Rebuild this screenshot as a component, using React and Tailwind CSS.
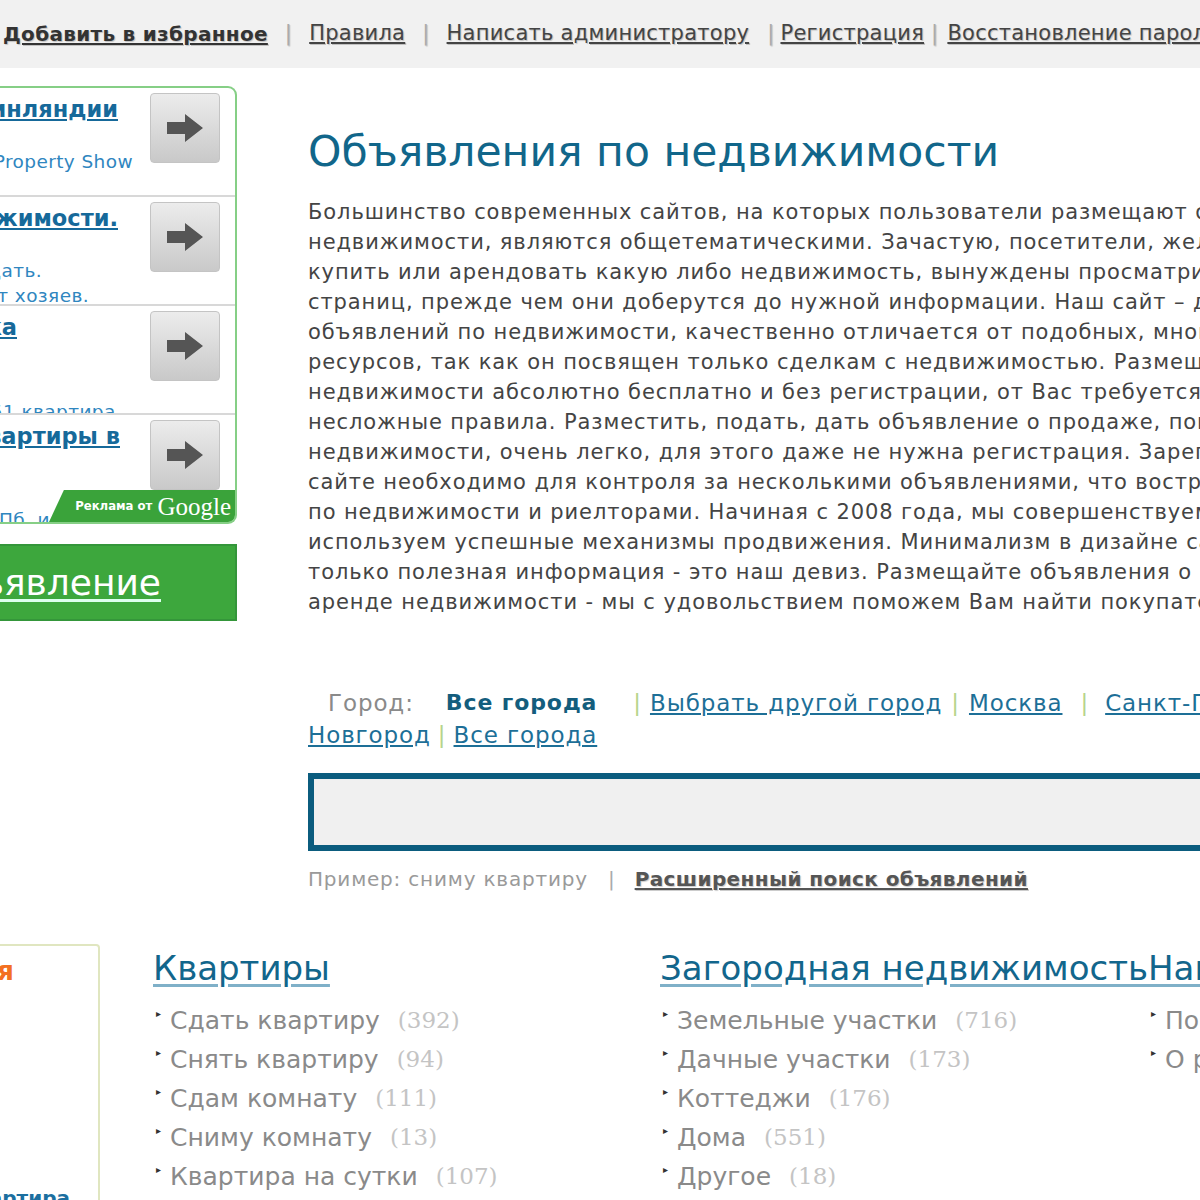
import React from "react";

const font = { fontFamily: '"DejaVu Sans", Verdana, sans-serif' };

// Top navigation links
function TopBar() {
  return (
    <div className="h-[68px] bg-[#f1f1f1] flex items-center whitespace-nowrap text-[21px] tracking-[0.25px] text-[#444] [text-shadow:1px_1px_1px_rgba(0,0,0,0.2)]">
      <a className="ml-[3px] text-[20px] tracking-[0.3px] font-bold text-[#333] underline underline-offset-2">Добавить в избранное</a>
      <span className="mx-[17px] text-[#aaa]">|</span>
      <a className="underline underline-offset-2">Правила</a>
      <span className="mx-[17px] text-[#aaa]">|</span>
      <a className="underline underline-offset-2">Написать администратору</a>
      <span className="ml-[18px] mr-[6px] text-[#aaa]">|</span>
      <a className="underline underline-offset-2">Регистрация</a>
      <span className="ml-[7px] mr-[9px] text-[#aaa]">|</span>
      <a className="underline underline-offset-2">Восстановление пароля</a>
    </div>
  );
}

function ArrowButton() {
  return (
    <div className="w-[70px] h-[70px] shrink-0 rounded-[4px] border border-[#c4c4c4] bg-gradient-to-b from-[#ececec] to-[#c9c9c9] flex items-center justify-center">
      <svg width="40" height="32" viewBox="0 0 40 32">
        <path d="M2 10 H20 V2 L38 16 L20 30 V22 H2 Z" fill="#555" />
      </svg>
    </div>
  );
}

// Line cut off at left edge (overflow goes to the left side)
function Cut({ children, className = "" }) {
  return (
    <div className={"flex justify-end overflow-hidden " + className}>
      <span className="whitespace-nowrap shrink-0">{children}</span>
    </div>
  );
}

const ads = [
  {
    title: "Недвижимость Финляндии",
    tr: "pr-[32px]",
    lines: [{ t: "International Property Show", pr: "pr-[17px]", mt: "mt-[23px]" }],
  },
  {
    title: "Продажа недвижимости.",
    tr: "pr-[32px]",
    lines: [
      { t: "Купить, снять, продать.", pr: "pr-[108px]", mt: "mt-[23px]" },
      { t: "Квартиры от хозяев.", pr: "pr-[61px]", mt: "mt-[0px]" },
    ],
  },
  {
    title: "Аренда и продажа",
    tr: "pr-[133px]",
    lines: [{ t: "от 1 251 квартира.", pr: "pr-[28px]", mt: "mt-[55px]" }],
  },
  {
    title: "Купить квартиры в",
    tr: "pr-[30px]",
    lines: [{ t: "Москве, СПб. и", pr: "pr-[100px]", mt: "mt-[54px]" }],
  },
];

function AdBox() {
  return (
    <div className="relative h-[438px] border-2 border-[#86cf86] rounded-r-[9px] border-l-0 bg-white overflow-hidden">
      {ads.map((ad, i) => (
        <div
          key={i}
          className={
            "h-[109px] flex " + (i < 3 ? "border-b-2 border-[#d8d8d8]" : "")
          }
        >
          <div className="w-[150px] shrink-0 overflow-hidden">
            <Cut className={"mt-[5px] " + ad.tr}>
              <span className="text-[22.5px] font-bold text-[#16699a] underline underline-offset-2">
                {ad.title}
              </span>
            </Cut>
            {ad.lines.map((l, j) => (
              <Cut key={j} className={l.mt + " " + l.pr}>
                <span className="text-[18.5px] tracking-[0.4px] leading-[23px] text-[#2f86bf]">{l.t}</span>
              </Cut>
            ))}
          </div>
          <div className="pt-[5px]">
            <ArrowButton />
          </div>
        </div>
      ))}
      {/* Google badge */}
      <div className="absolute right-0 bottom-0 h-[32px] w-[186px] bg-[#3aa33a] rounded-tl-[14px] [clip-path:polygon(8%_0,100%_0,100%_100%,0_100%)] flex items-center justify-end pr-[4px] text-white">
        <span className="text-[13px] font-bold mr-[5px]" style={{ fontFamily: '"DejaVu Sans Condensed", sans-serif' }}>
          Реклама от
        </span>
        <span className="text-[25px] leading-none" style={{ fontFamily: '"Liberation Serif", serif' }}>
          Google
        </span>
      </div>
    </div>
  );
}

function SubmitButton() {
  return (
    <div className="mt-[20px] h-[77px] bg-[#3da73d] border-2 border-[#34963a] border-l-0 flex items-center overflow-hidden">
      <Cut className="w-full pr-[74px]">
        <span className="text-[36px] text-white underline decoration-[#dfe] underline-offset-4">
          Подать объявление
        </span>
      </Cut>
    </div>
  );
}

const para = [
  "Большинство современных сайтов, на которых пользователи размещают объявления о продаже",
  "недвижимости, являются общетематическими. Зачастую, посетители, желающие",
  "купить или арендовать какую либо недвижимость, вынуждены просматривать десятки",
  "страниц, прежде чем они доберутся до нужной информации. Наш сайт – доска",
  "объявлений по недвижимости, качественно отличается от подобных, многопрофильных",
  "ресурсов, так как он посвящен только сделкам с недвижимостью. Размещение объявлений",
  "недвижимости абсолютно бесплатно и без регистрации, от Вас требуется соблюдать",
  "несложные правила. Разместить, подать, дать объявление о продаже, покупке, аренде",
  "недвижимости, очень легко, для этого даже не нужна регистрация. Зарегистрироваться на",
  "сайте необходимо для контроля за несколькими объявлениями, что востребовано агентствами",
  "по недвижимости и риелторами. Начиная с 2008 года, мы совершенствуем сайт и",
  "используем успешные механизмы продвижения. Минимализм в дизайне сайта и",
  "только полезная информация - это наш девиз. Размещайте объявления о продаже и",
  "аренде недвижимости - мы с удовольствием поможем Вам найти покупателя!",
];

function Main() {
  return (
    <div className="ml-[71px] flex-1 min-w-0">
      <h1 className="mt-[54px] text-[42.5px] leading-[60px] text-[#11668a] whitespace-nowrap">
        Объявления по недвижимости
      </h1>
      <div className="mt-[15px] text-[21px] tracking-[0.9px] leading-[30px] text-[#444] whitespace-nowrap">
        {para.map((l, i) => (
          <div key={i}>{l}</div>
        ))}
      </div>

      {/* City selector */}
      <div className="mt-[70px] text-[23px] tracking-[0.9px] leading-[32px] whitespace-nowrap">
        <div className="flex">
          <span className="ml-[20px] text-[#8a8a8a]">Город:</span>
          <span className="ml-[32px] text-[22px] tracking-[0.9px] font-bold text-[#135d7d]">Все города</span>
          <span className="ml-[36px] mr-[8px] text-[#b6d48a]">|</span>
          <a className="text-[#1d6f97] underline underline-offset-2">Выбрать другой город</a>
          <span className="mx-[9px] text-[#b6d48a]">|</span>
          <a className="text-[#1d6f97] underline underline-offset-2">Москва</a>
          <span className="ml-[18px] mr-[16px] text-[#b6d48a]">|</span>
          <a className="text-[#1d6f97] underline underline-offset-2">Санкт-Петербург</a>
        </div>
        <div className="flex">
          <a className="text-[#1d6f97] underline underline-offset-2">Новгород</a>
          <span className="mx-[7px] text-[#b6d48a]">|</span>
          <a className="text-[#1d6f97] underline underline-offset-2">Все города</a>
        </div>
      </div>

      {/* Search */}
      <div className="mt-[22px] h-[78px] w-[1000px] border-[6px] border-[#0b5c7e] bg-[#f0f0f0]" />
      <div className="mt-[13px] flex items-center whitespace-nowrap text-[20px]">
        <span className="text-[#9a9a9a] tracking-[0.8px]">Пример: сниму квартиру</span>
        <span className="mx-[20px] text-[#aaa]">|</span>
        <a className="font-bold tracking-[0.4px] text-[#555] underline underline-offset-2 [text-shadow:1px_1px_1px_rgba(0,0,0,0.2)]">
          Расширенный поиск объявлений
        </a>
      </div>
    </div>
  );
}

const cats = [
  {
    title: "Квартиры",
    w: "w-[507px]",
    items: [
      ["Сдать квартиру", 392],
      ["Снять квартиру", 94],
      ["Сдам комнату", 111],
      ["Сниму комнату", 13],
      ["Квартира на сутки", 107],
    ],
  },
  {
    title: "Загородная недвижимость",
    w: "w-[488px]",
    items: [
      ["Земельные участки", 716],
      ["Дачные участки", 173],
      ["Коттеджи", 176],
      ["Дома", 551],
      ["Другое", 18],
    ],
  },
  {
    title: "Наша недвижимость",
    w: "w-[400px]",
    items: [
      ["Помещения", 45],
      ["О разном", 12],
    ],
  },
];

function Categories() {
  return (
    <div className="mt-[50px] flex">
      <div className="w-[100px] h-[300px] shrink-0 border-2 border-l-0 border-[#e0e6c0] rounded-tr-[4px] overflow-hidden">
        <Cut className="mt-[6px] pr-[84px] leading-[39px]">
          <span className="text-[26px] font-bold text-[#f37021]">Новые объявления</span>
        </Cut>
        <Cut className="mt-[192px] pr-[28px] leading-[24px]">
          <span className="text-[20px] font-bold text-[#1b6fa0] underline">Продам квартира</span>
        </Cut>
      </div>
      <div className="ml-[53px] flex whitespace-nowrap">
        {cats.map((c) => (
          <div key={c.title} className={c.w + " shrink-0"}>
            <a className="block text-[34px] leading-[48px] text-[#12668c] underline underline-offset-4 decoration-[#7fb0c8]">
              {c.title}
            </a>
            <ul className="mt-[9px]">
              {c.items.map(([name, n]) => (
                <li key={name} className="flex items-center h-[39px] text-[25px] text-[#8a8a8a]">
                  <span className="ml-[3px] mr-[9px] mb-[14px] text-[10px] text-[#333]">▸</span>
                  <span>{name}</span>
                  <span
                    className="ml-[18px] text-[23px] text-[#c4c4c4]"
                    style={{ fontFamily: '"DejaVu Serif", Georgia, serif' }}
                  >
                    ({n})
                  </span>
                </li>
              ))}
            </ul>
          </div>
        ))}
      </div>
    </div>
  );
}

export default function App() {
  return (
    <div className="w-[1200px] h-[1200px] overflow-hidden bg-white" style={font}>
      <TopBar />
      <div className="flex">
        <div className="w-[237px] shrink-0 mt-[18px]">
          <AdBox />
          <SubmitButton />
        </div>
        <Main />
      </div>
      <Categories />
    </div>
  );
}
